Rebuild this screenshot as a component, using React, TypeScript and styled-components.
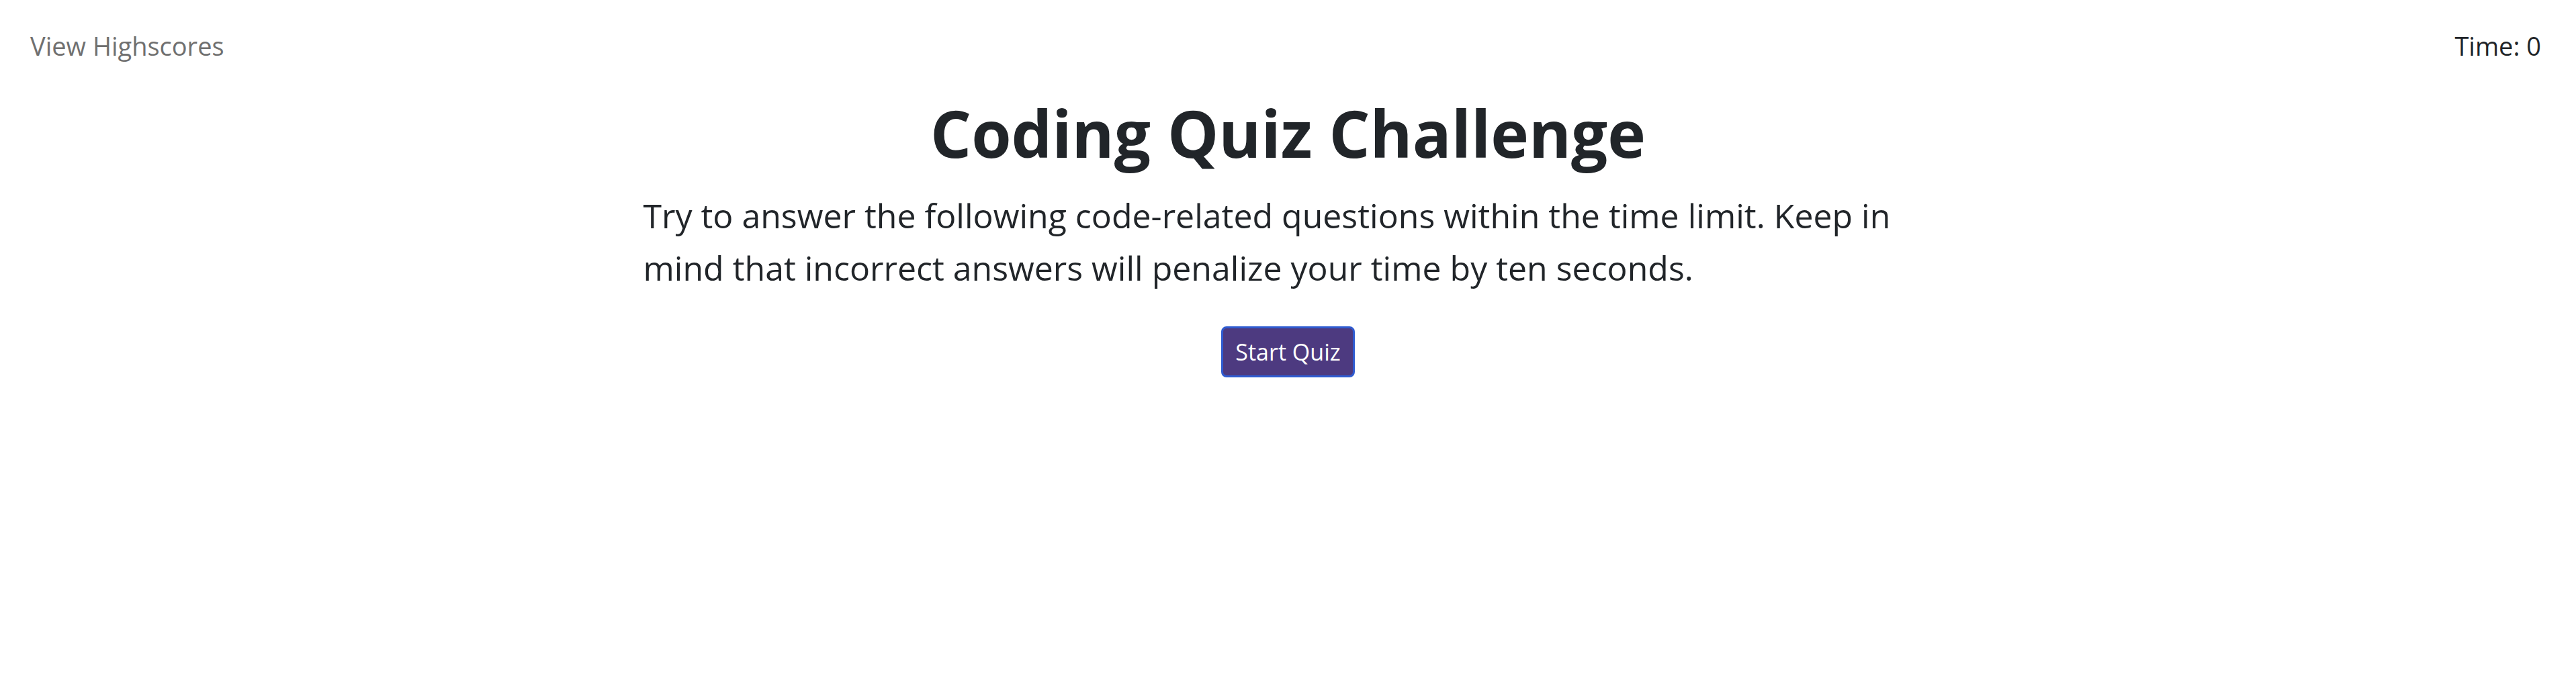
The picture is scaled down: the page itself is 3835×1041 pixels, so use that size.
import styled, { createGlobalStyle } from "styled-components";

const GlobalStyle = createGlobalStyle`
  * { box-sizing: border-box; }
  body {
    margin: 0;
    background: #ffffff;
    color: #212529;
    font-family: "Open Sans", "Noto Sans", sans-serif;
  }
`;

const Page = styled.div`
  width: 100%;
  min-height: 100vh;
  display: flex;
  flex-direction: column;
`;

const TopBar = styled.header`
  display: flex;
  justify-content: space-between;
  align-items: center;
  padding: 38px 52px 0 45px;
  font-size: 38px;
  line-height: 60px;
`;

const HighscoresLink = styled.a`
  color: #707070;
  text-decoration: none;
  cursor: pointer;
`;

const Timer = styled.span`
  color: #212529;
`;

const Main = styled.main`
  display: flex;
  flex-direction: column;
  align-items: center;
  padding-top: 40px;
`;

const Title = styled.h1`
  margin: 0 0 24px;
  font-size: 96px;
  line-height: 120px;
  font-weight: 700;
  color: #212529;
`;

const Intro = styled.p`
  width: 1920px;
  margin: 0;
  font-size: 50px;
  line-height: 78px;
  font-weight: 400;
  color: #212529;
`;

const StartButton = styled.button`
  margin-top: 48px;
  height: 76px;
  padding: 0 18px;
  font-family: inherit;
  font-size: 34px;
  color: #ffffff;
  background: #4d3a80;
  border: 3px solid #2f5bd0;
  border-radius: 8px;
  cursor: pointer;
`;

export default function App() {
  return (
    <Page>
      <GlobalStyle />
      <TopBar>
        <HighscoresLink>View Highscores</HighscoresLink>
        <Timer>Time: 0</Timer>
      </TopBar>
      <Main>
        <Title>Coding Quiz Challenge</Title>
        <Intro>
          Try to answer the following code-related questions within the time
          limit. Keep in mind that incorrect answers will penalize your time by
          ten seconds.
        </Intro>
        <StartButton>Start Quiz</StartButton>
      </Main>
    </Page>
  );
}
